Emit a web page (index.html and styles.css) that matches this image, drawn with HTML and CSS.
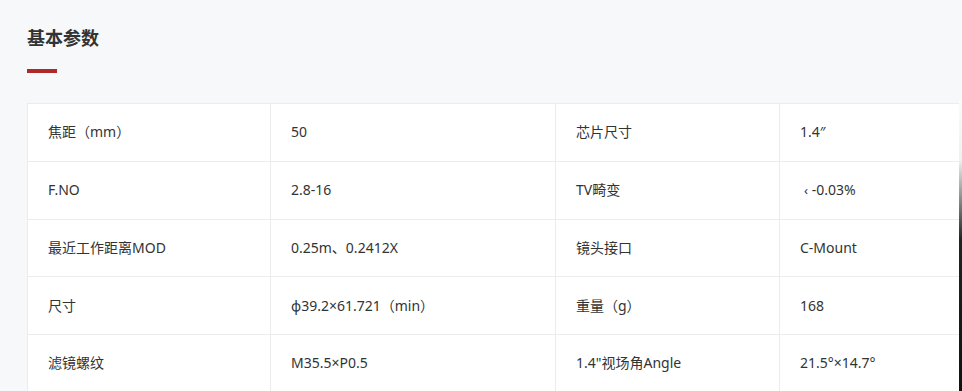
FILE: index.html
```html
<!DOCTYPE html>
<html lang="zh-CN">
<head>
<meta charset="utf-8">
<link rel="stylesheet" href="styles.css">
</head>
<body>
<section class="params">
  <h2 class="title">基本参数</h2>
  <div class="bar"></div>
  <table class="spec">
    <colgroup>
      <col class="c1"><col class="c2"><col class="c3"><col class="c4">
    </colgroup>
    <tbody>
      <tr><td>焦距（mm）</td><td>50</td><td>芯片尺寸</td><td>1.4″</td></tr>
      <tr><td>F.NO</td><td>2.8-16</td><td>TV畸变</td><td><span class="lt">‹</span> -0.03%</td></tr>
      <tr><td>最近工作距离MOD</td><td>0.25m、0.2412X</td><td>镜头接口</td><td>C-Mount</td></tr>
      <tr><td>尺寸</td><td>φ39.2×61.721（min）</td><td>重量（g）</td><td>168</td></tr>
      <tr><td>滤镜螺纹</td><td>M35.5×P0.5</td><td>1.4"视场角Angle</td><td>21.5°×14.7°</td></tr>
    </tbody>
  </table>
</section>
<div class="edge"></div>
</body>
</html>
```

FILE: styles.css
```css
html, body {
  margin: 0;
  padding: 0;
  background: #f7f8fa;
  overflow: hidden;
}
body {
  font-family: "Noto Sans CJK SC", "Microsoft YaHei", sans-serif;
  color: #333;
  height: 391px;
}
.params {
  padding: 24px 0 0 27px;
}
.title {
  margin: 0;
  font-size: 18px;
  line-height: 26px;
  font-weight: 700;
  color: #333;
}
.bar {
  width: 30px;
  height: 4px;
  background: #b0292a;
  margin-top: 19px;
}
.spec {
  margin-top: 30px;
  width: 932px;
  border-collapse: collapse;
  background: #fff;
  table-layout: fixed;
}
.c1 { width: 243px; }
.c2 { width: 285px; }
.c3 { width: 224px; }
.c4 { width: 180px; }
.spec td {
  border: 1px solid #ececec;
  height: 57.75px;
  padding: 0 0 0 20px;
  font-family: "Noto Sans", "Noto Sans CJK SC", sans-serif;
  font-size: 14px;
  line-height: 20px;
  color: #333;
  vertical-align: middle;
  box-sizing: border-box;
}
.lt {
  margin-left: 4px;
  font-size: 13px;
}
.edge {
  position: absolute;
  top: 100px;
  right: 0;
  width: 3px;
  height: 291px;
  background: linear-gradient(to bottom, #fafafa 0, #f0f0f0 60px, #222 140px, #111 100%);
}
```
